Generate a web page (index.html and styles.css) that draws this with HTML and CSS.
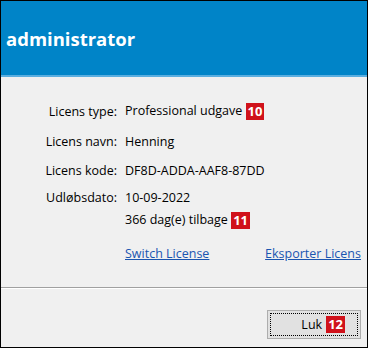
FILE: index.html
```html
<!DOCTYPE html>
<html lang="da">
<head>
    <meta charset="UTF-8">
    <title>Licens</title>
    <link rel="stylesheet" href="styles.css">
</head>
<body>
    <div class="dialog">
        <div class="header">
            <h1>administrator</h1>
        </div>
        <div class="content">
            <div class="info">
                <div class="label">Licens type:</div>
                <div class="value">Professional udgave <span class="badge">10</span></div>
                <div class="label">Licens navn:</div>
                <div class="value">Henning</div>
                <div class="label">Licens kode:</div>
                <div class="value">DF8D-ADDA-AAF8-87DD</div>
                <div class="label">Udløbsdato:</div>
                <div class="value">10-09-2022</div>
                <div class="label"></div>
                <div class="value">366 dag(e) tilbage <span class="badge">11</span></div>
            </div>
            <div class="links">
                <a href="#">Switch License</a>
                <a href="#">Eksporter Licens</a>
            </div>
        </div>
        <div class="footer">
            <button class="close-btn"><span class="focus">Luk <span class="badge">12</span></span></button>
        </div>
    </div>
</body>
</html>
```
FILE: styles.css
```css
body {
    margin: 0;
    font-family: 'Open Sans', 'Noto Sans', sans-serif;
    font-size: 12.5px;
    color: #000;
}
.dialog {
    width: 368px;
    height: 348px;
    box-sizing: border-box;
    border: 1px solid #000;
    background: #f0f0f0;
    display: flex;
    flex-direction: column;
    overflow: hidden;
}
.header {
    height: 74px;
    background: #0084c8;
    border-bottom: 2px solid #5aaee0;
    display: flex;
    align-items: center;
    padding-left: 5px;
}
.header h1 {
    margin: 0;
    color: #fff;
    font-size: 18.5px;
    font-weight: bold;
}
.content {
    height: 210px;
    border-bottom: 1px solid #a0a0a0;
}
.info {
    display: grid;
    grid-template-columns: 116px auto;
    grid-template-rows: 30px 30px 28px 26px 20px;
    align-items: center;
    column-gap: 8px;
    padding-top: 19px;
}
.label {
    text-align: right;
}
.badge {
    display: inline-block;
    background: #d0121b;
    color: #fff;
    font-weight: bold;
    font-size: 13px;
    line-height: 17px;
    padding: 0 2px;
    vertical-align: middle;
}
.links {
    display: flex;
    justify-content: space-between;
    padding: 15px 6px 0 124px;
}
.links a {
    color: #1a55b0;
}
.footer {
    flex: 1;
    border-top: 1px solid #fff;
    display: flex;
    justify-content: flex-end;
    align-items: flex-start;
    padding: 21px 6px 0 0;
}
.close-btn {
    width: 94px;
    height: 29px;
    background: #e1e1e1;
    border: 1px solid #adadad;
    padding: 2px;
    font-family: inherit;
    font-size: 12.5px;
}
.focus {
    display: flex;
    align-items: center;
    justify-content: flex-end;
    height: 100%;
    gap: 4px;
    padding-right: 12px;
    box-sizing: border-box;
    border: 1px dotted #000;
}
```
